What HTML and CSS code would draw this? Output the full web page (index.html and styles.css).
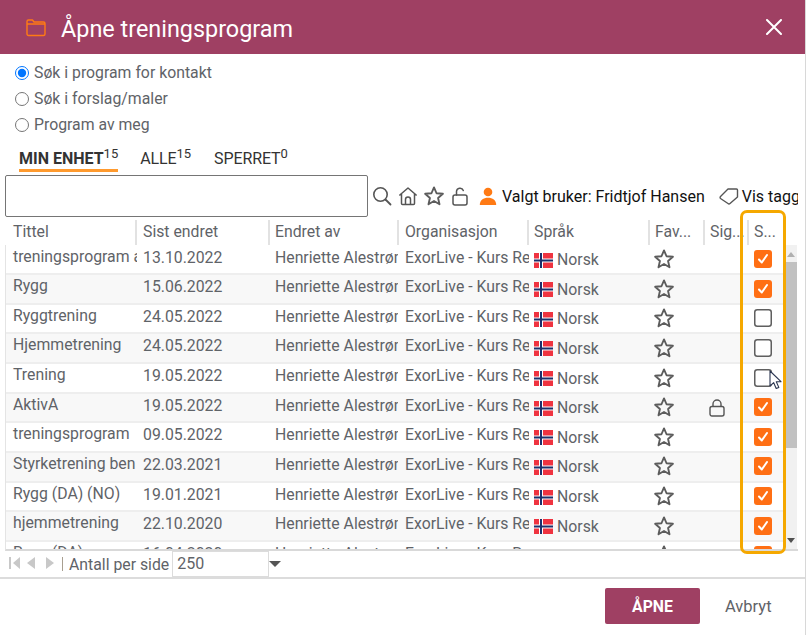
FILE: index.html
```html
<!DOCTYPE html>
<html lang="no">
<head>
<meta charset="utf-8">
<title>Åpne treningsprogram</title>
<link rel="stylesheet" href="styles.css">
</head>
<body>
<svg class="defs" width="0" height="0" aria-hidden="true">
  <defs>
    <symbol id="star" viewBox="0 0 20 20"><path d="M10 2.2l2.3 5.3 5.8.5-4.4 3.8 1.3 5.7-5-3-5 3 1.3-5.7L1.900 8l5.800-.5z" fill="none" stroke="#5c5c5c" stroke-width="1.700" stroke-linejoin="round"/></symbol>
    <symbol id="flag" viewBox="0 0 19 15"><rect width="19" height="15" fill="#ef3340"/><rect x="5" width="4" height="15" fill="#fff"/><rect y="5.500" width="19" height="4" fill="#fff"/><rect x="6" width="2" height="15" fill="#1c2f6b"/><rect y="6.500" width="19" height="2" fill="#1c2f6b"/></symbol>
    <symbol id="checked" viewBox="0 0 18 18"><rect width="18" height="18" rx="3" fill="#ff6f14"/><path d="M5 9.500l2.800 3L13 5" fill="none" stroke="#fff" stroke-width="2" stroke-linecap="round" stroke-linejoin="round"/></symbol>
    <symbol id="unchecked" viewBox="0 0 18 18"><rect x=".75" y=".75" width="16.500" height="16.500" rx="2.500" fill="#fff" stroke="#5f5f5f" stroke-width="1.500"/></symbol>
  </defs>
</svg>
<main class="dialog">
  <header class="head">
    <svg class="folder" viewBox="0 0 20 18" width="20" height="18"><path d="M1 4V2.500A1.500 1.500 0 0 1 2.500 1h4L8 3h9.500A1.500 1.500 0 0 1 19 4.500v10.500a1.500 1.500 0 0 1-1.500 1.500h-15A1.500 1.500 0 0 1 1 15z M1 5h18" fill="none" stroke="#ff7a14" stroke-width="1.400" stroke-linejoin="round"/></svg>
    <h1 class="title">Åpne treningsprogram</h1>
    <svg class="close" viewBox="0 0 16 16" width="16" height="16"><path d="M1 1l14 14M15 1L1 15" stroke="#fff" stroke-width="2" stroke-linecap="round"/></svg>
  </header>

  <div class="radios">
    <label class="radio"><input type="radio" name="scope" checked><span>Søk i program for kontakt</span></label>
    <label class="radio"><input type="radio" name="scope"><span>Søk i forslag/maler</span></label>
    <label class="radio"><input type="radio" name="scope"><span>Program av meg</span></label>
  </div>

  <nav class="tabs">
    <span class="tab active">MIN ENHET<sup>15</sup></span>
    <span class="tab">ALLE<sup>15</sup></span>
    <span class="tab">SPERRET<sup>0</sup></span>
  </nav>

  <div class="toolbar">
    <input class="search" type="text" aria-label="Søk">
    <div class="tools">
      <svg viewBox="0 0 20 20" width="20" height="20"><circle cx="8.500" cy="8.500" r="6.700" fill="none" stroke="#555" stroke-width="1.600"/><path d="M13.500 13.500l5 5" stroke="#555" stroke-width="1.800" stroke-linecap="round"/></svg>
      <svg viewBox="0 0 20 20" width="20" height="20"><path d="M1.800 9L10 2l8.200 7M3.500 8v9.500a1 1 0 0 0 1 1h11a1 1 0 0 0 1-1V8M7.500 18.500v-5a2.500 2.500 0 0 1 5 0v5" fill="none" stroke="#555" stroke-width="1.500" stroke-linejoin="round" stroke-linecap="round"/></svg>
      <svg class="toolstar" viewBox="0 0 20 20" width="22" height="22"><use href="#star"/></svg>
      <svg viewBox="0 0 20 20" width="20" height="20"><rect x="3" y="9" width="14" height="10" rx="2" fill="none" stroke="#555" stroke-width="1.500"/><path d="M6.500 9V5.500a3.500 3.500 0 0 1 6.800-1" fill="none" stroke="#555" stroke-width="1.500" stroke-linecap="round"/></svg>
    </div>
    <div class="user">
      <svg viewBox="0 0 18 18" width="18" height="18"><circle cx="9" cy="5" r="4.300" fill="#ff7a14"/><path d="M.8 18c0-5 3.700-7.300 8.200-7.300s8.200 2.300 8.200 7.300z" fill="#ff7a14"/></svg>
      <span>Valgt bruker: Fridtjof Hansen</span>
    </div>
    <div class="tags">
      <svg viewBox="0 0 20 18" width="20" height="18"><path d="M1.500 9.500L9 2h8.500a1 1 0 0 1 1 1v7L11 16.500a1.500 1.500 0 0 1-2 0L1.500 11.500a1.400 1.400 0 0 1 0-2z" fill="none" stroke="#555" stroke-width="1.400" stroke-linejoin="round"/></svg>
      <span>Vis tagger</span>
    </div>
  </div>

  <section class="grid">
    <div class="row headrow">
      <div class="th first">Tittel</div><div class="th">Sist endret</div><div class="th tight">Endret av</div><div class="th">Organisasjon</div><div class="th tight">Språk</div><div class="th tight">Fav...</div><div class="th tight">Sig...</div><div class="th tight last">S...</div>
    </div>
    <div class="body">
      <div class="rows" id="rows"></div>
      <div class="scrollbar">
        <span class="arrow up"></span>
        <span class="thumb"></span>
        <span class="arrow down"></span>
      </div>
    </div>
  </section>

  <div class="pager">
    <svg viewBox="0 0 48 14" width="48" height="14" class="pager-icons"><path d="M1 1h2v12H1zM12 1v12L5 7z M27 1v12l-8-6z M38 1v12l8-6z" fill="#c8c8c8"/></svg>
    <span class="sep"></span>
    <span class="per">Antall per side</span>
    <div class="size"><span>250</span></div>
    <span class="drop"></span>
  </div>

  <footer class="foot">
    <button class="open" type="button">ÅPNE</button>
    <button class="cancel" type="button">Avbryt</button>
  </footer>

  <div class="highlight"></div>
  <svg class="cursor" viewBox="0 0 14 20" width="14" height="20"><path d="M1 1v15l3.700-3.300 2.500 5.800 2.600-1.100-2.500-5.700H12z" fill="#fff" stroke="#2a3550" stroke-width="1.100" stroke-linejoin="round"/></svg>
</main>
<script src="app.js"></script>
</body>
</html>
```
FILE: styles.css
```css
* { box-sizing: border-box; }
html, body { margin: 0; padding: 0; background: #fff; }
body { font-family: Roboto, "Liberation Sans", sans-serif; color: #5f6368; overflow: hidden; }
.defs { position: absolute; }
.dialog { position: relative; width: 806px; height: 635px; display: flex; flex-direction: column; border-right: 1px solid #d8d8d8; overflow: hidden; }

.head { height: 54px; background: #9f4063; display: flex; align-items: center; padding: 0 23px 0 26px; flex: none; }
.folder { flex: none; margin-top: 2px; }
.title { margin: 5px 0 0 15px; font-size: 23.400px; font-weight: 400; color: #fff; flex: 1; line-height: 49px; }
.close { flex: none; }

.radios { padding: 5px 0 0 15px; height: 92px; flex: none; }
.radio { display: flex; align-items: center; height: 26px; font-size: 15.800px; gap: 5px; }
.radio input { margin: 1px 0 0; width: 14px; height: 14px; flex: none; accent-color: #0075ff; }

.tabs { display: flex; padding-left: 19px; gap: 23px; height: 29px; flex: none; }
.tab { font-size: 16px; color: #333; height: 26px; line-height: 26px; letter-spacing: -.1px; }
.tab sup { font-size: 13px; line-height: 0; vertical-align: 6px; }
.tab.active { font-weight: 700; border-bottom: 3px solid #ff9a2e; letter-spacing: 0; margin-right: -1px; }
.tab.active sup { font-weight: 400; }

.toolbar { display: flex; align-items: center; height: 42px; padding-left: 5px; flex: none; white-space: nowrap; overflow: hidden; width: 798px; }
.search { width: 363px; height: 42px; border: 1px solid #757575; border-radius: 2px; background: #fff; flex: none; }
.tools { display: flex; gap: 6px; margin: 0 0 0 4px; align-items: center; flex: none; }
.toolstar { margin: 0 -1px; }
.user { display: flex; align-items: center; gap: 5px; margin-left: 9px; font-size: 16px; color: #111; flex: none; }
.tags { display: flex; align-items: center; gap: 3px; margin-left: 14px; font-size: 16px; color: #111; flex: none; }

.grid { margin: 2px 0 0 5px; width: 793px; flex: none; }
.row { display: grid; grid-template-columns: 132px 133px 129px 130px 121px 55px 44px 37px; }
.headrow { height: 28px; padding-top: 1px; }
.th { font-size: 15.800px; line-height: 24px; height: 25px; padding-left: 6px; border-right: 2px solid #e2e2e2; white-space: nowrap; overflow: hidden; }
.th.first { padding-left: 8px; }
.th.tight { padding-left: 5px; }
.th.last { border-right: 0; }

.body { height: 306px; display: flex; border-left: 1px solid #e4e4e4; border-bottom: 2px solid #d9d9d9; overflow: hidden; margin-top: -2px; }
.rows { width: 778px; flex: none; padding-top: .5px; }
.rows .row { grid-template-columns: 131px 133px 129px 130px 121px 55px 44px 35px; height: 29.650px; border-bottom: 2px solid #eeeeee; font-size: 15.800px; align-items: start; border-right: 1px solid #eee; }
.rows .row:nth-child(even) { background: #f8f8f8; }
.cell { padding: 0 3px 0 7px; line-height: 22px; white-space: nowrap; overflow: hidden; }
.cell.date { padding-left: 6px; line-height: 24px; }
.cell.by, .cell.org { padding-left: 6px; line-height: 24px; }
.cell.by { padding-left: 5px; margin-right: 1px; }
.cell.lang { display: flex; align-items: center; gap: 4px; padding-left: 5px; height: 29px; }
.cell.lang svg { flex: none; }
.cell.fav { padding-left: 3px; height: 27px; display: flex; align-items: center; overflow: visible; }
.cell.sig { padding-left: 4px; height: 28px; display: flex; align-items: center; }
.cell.sel { padding-left: 5px; height: 27px; display: flex; align-items: center; overflow: visible; }

.scrollbar { width: 13px; background: #f1f1f1; position: relative; display: flex; flex-direction: column; align-items: center; flex: none; }
.arrow { width: 0; height: 0; border-left: 4px solid transparent; border-right: 4px solid transparent; flex: none; }
.arrow.up { border-bottom: 5px solid #b0b0b0; margin: 7px 0 5px; }
.arrow.down { border-top: 5px solid #505050; margin-top: auto; margin-bottom: 6px; }
.thumb { width: 13px; height: 186px; background: #c1c1c1; flex: none; }

.pager { height: 28px; display: flex; align-items: center; padding-left: 8px; border-bottom: 2px solid #dcdcdc; flex: none; font-size: 15.800px; }
.pager-icons { flex: none; margin-top: -3px; }
.sep { width: 1px; height: 14px; background: #a89f90; margin-left: 6px; flex: none; }
.per { margin-left: 6px; flex: none; }
.size { width: 97px; height: 26px; border: 1px solid #dcdcdc; margin-left: 3px; padding-left: 4px; line-height: 23px; font-size: 16px; }
.drop { width: 0; height: 0; border-left: 6.500px solid transparent; border-right: 6.500px solid transparent; border-top: 6px solid #555; }

.foot { flex: 1; display: flex; align-items: flex-start; padding: 9px 0 0 605px; gap: 25px; }
.open { width: 95px; height: 36px; background: #9f4063; border: 0; border-radius: 2px; color: #fff; font: 700 15.800px Roboto, sans-serif; }
.cancel { background: none; border: 0; padding: 0; height: 36px; font: 400 16.500px Roboto, sans-serif; color: #5f6368; }

.highlight { position: absolute; left: 740px; top: 210px; width: 46px; height: 344px; border: 3px solid #f5a800; border-radius: 7px; pointer-events: none; }
.cursor { position: absolute; left: 769px; top: 370px; }
```
FILE: app.js
```js
const data = [
  ["treningsprogram av", "13.10.2022", 1, 0],
  ["Rygg", "15.06.2022", 1, 0],
  ["Ryggtrening", "24.05.2022", 0, 0],
  ["Hjemmetrening", "24.05.2022", 0, 0],
  ["Trening", "19.05.2022", 0, 0],
  ["AktivA", "19.05.2022", 1, 1],
  ["treningsprogram", "09.05.2022", 1, 0],
  ["Styrketrening ben", "22.03.2021", 1, 0],
  ["Rygg (DA) (NO)", "19.01.2021", 1, 0],
  ["hjemmetrening", "22.10.2020", 1, 0],
  ["Rygg (DA)", "16.04.2020", 1, 0]
];
const lock = '<svg viewBox="0 0 16 18" width="16" height="18"><rect x="1" y="7.500" width="14" height="9.500" rx="2" fill="none" stroke="#555" stroke-width="1.400"/><path d="M4 7.500V5a4 4 0 0 1 8 0v2.500" fill="none" stroke="#555" stroke-width="1.400"/></svg>';
document.getElementById("rows").innerHTML = data.map(([t, d, c, l]) => `
  <div class="row">
    <div class="cell">${t}</div>
    <div class="cell date">${d}</div>
    <div class="cell by">Henriette Alestrøm</div>
    <div class="cell org">ExorLive - Kurs Resept</div>
    <div class="cell lang"><svg width="19" height="15"><use href="#flag"/></svg>Norsk</div>
    <div class="cell fav"><svg viewBox="0 0 20 20" width="22" height="22"><use href="#star"/></svg></div>
    <div class="cell sig">${l ? lock : ""}</div>
    <div class="cell sel"><svg width="18" height="18"><use href="#${c ? "checked" : "unchecked"}"/></svg></div>
  </div>`).join("");
```
